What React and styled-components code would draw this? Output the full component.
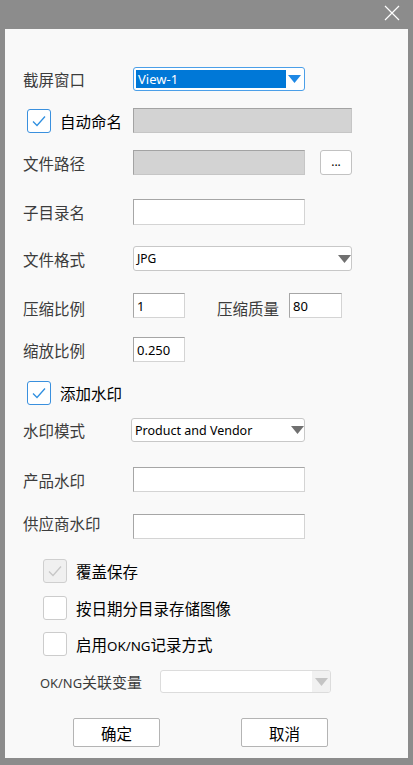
import styled, { createGlobalStyle } from "styled-components";

const GlobalStyle = createGlobalStyle`
  html, body {
    margin: 0;
    padding: 0;
    background: #8c8c8c;
  }
  * {
    box-sizing: border-box;
  }
`;

const FONT = `"Noto Sans CJK SC", "Noto Sans", sans-serif`;

export default function App() {
  return (
    <Window>
      <GlobalStyle />
      <TitleBar>
        <CloseIcon />
      </TitleBar>
      <Panel>
        <Row $top={38} $h={24}>
          <Label>截屏窗口</Label>
          <ActiveCombo>
            <Selected>View-1</Selected>
            <Arrow color="#1e88e5" />
          </ActiveCombo>
        </Row>

        <Row $top={17} $h={25} $left={22}>
          <CheckBox checked />
          <CheckLabel $w={73}>自动命名</CheckLabel>
          <GrayBox $w={219} />
        </Row>

        <Row $top={17} $h={25}>
          <Label>文件路径</Label>
          <GrayBox $w={172} />
          <BrowseButton>...</BrowseButton>
        </Row>

        <Row $top={24} $h={26}>
          <Label>子目录名</Label>
          <TextBox $w={172} />
        </Row>

        <Row $top={21} $h={25}>
          <Label>文件格式</Label>
          <Combo $w={219}>
            <ComboText $size={12}>JPG</ComboText>
            <Arrow color="#707070" />
          </Combo>
        </Row>

        <Row $top={22} $h={25}>
          <Label $offset={2}>压缩比例</Label>
          <TextBox $w={52}>1</TextBox>
          <Label $w={72} $ml={32} $offset={2}>压缩质量</Label>
          <TextBox $w={53}>80</TextBox>
        </Row>

        <Row $top={19} $h={25}>
          <Label>缩放比例</Label>
          <TextBox $w={52}>0.250</TextBox>
        </Row>

        <Row $top={19} $h={24} $left={22}>
          <CheckBox checked />
          <CheckLabel>添加水印</CheckLabel>
        </Row>

        <Row $top={13} $h={24}>
          <Label $w={108}>水印模式</Label>
          <Combo $w={174}>
            <ComboText $size={12.5}>Product and Vendor</ComboText>
            <Arrow color="#707070" />
          </Combo>
        </Row>

        <Row $top={25} $h={25}>
          <Label>产品水印</Label>
          <TextBox $w={172} />
        </Row>

        <Row $top={22} $h={25}>
          <Label $offset={-4}>供应商水印</Label>
          <TextBox $w={172} />
        </Row>

        <Row $top={20} $h={24} $left={38}>
          <CheckBox checked disabled />
          <CheckLabel>覆盖保存</CheckLabel>
        </Row>

        <Row $top={13} $h={24} $left={38}>
          <CheckBox />
          <CheckLabel>按日期分目录存储图像</CheckLabel>
        </Row>

        <Row $top={12} $h={24} $left={38}>
          <CheckBox />
          <CheckLabel>
            启用<Latin>OK/NG</Latin>记录方式
          </CheckLabel>
        </Row>

        <Row $top={14} $h={23} $left={35}>
          <SmallLabel>
            <Latin>OK/NG</Latin>关联变量
          </SmallLabel>
          <Combo $w={171} $disabled>
            <ComboText />
            <ArrowBox>
              <Arrow color="#c4c4c4" />
            </ArrowBox>
          </Combo>
        </Row>

        <ButtonRow>
          <Button>确定</Button>
          <Button>取消</Button>
        </ButtonRow>
      </Panel>
    </Window>
  );
}

function CloseIcon() {
  return (
    <CloseSvg width="16" height="16" viewBox="0 0 16 16">
      <path d="M1 1 L15 15 M15 1 L1 15" stroke="#ffffff" strokeWidth="1.2" fill="none" />
    </CloseSvg>
  );
}

function Arrow({ color }) {
  return (
    <ArrowSvg width="13" height="8" viewBox="0 0 13 8">
      <path d="M0 0 H13 L6.5 8 Z" fill={color} />
    </ArrowSvg>
  );
}

function CheckBox({ checked, disabled }) {
  return (
    <Box $checked={checked} $disabled={disabled}>
      {checked && (
        <svg width="22" height="22" viewBox="0 0 22 22">
          <path
            d="M5 11.5 L9 15.5 L17 6.5"
            stroke={disabled ? "#c6c6c6" : "#2f8fe0"}
            strokeWidth="1.3"
            fill="none"
          />
        </svg>
      )}
    </Box>
  );
}

const Window = styled.div`
  display: flex;
  flex-direction: column;
  width: 413px;
  height: 765px;
  background: #8c8c8c;
  font-family: ${FONT};
`;

const TitleBar = styled.div`
  height: 29px;
  display: flex;
  justify-content: flex-end;
  align-items: center;
  padding-right: 13px;
  padding-bottom: 3px;
`;

const CloseSvg = styled.svg`
  display: block;
`;

const Panel = styled.div`
  flex: 1;
  margin: 0 5px 7px 5px;
  background: #f9f9f9;
  display: flex;
  flex-direction: column;
`;

const Row = styled.div`
  display: flex;
  align-items: center;
  height: ${(p) => p.$h}px;
  margin-top: ${(p) => p.$top}px;
  padding-left: ${(p) => p.$left ?? 18}px;
`;

const Label = styled.span`
  width: ${(p) => p.$w ?? 110}px;
  margin-left: ${(p) => p.$ml ?? 0}px;
  flex-shrink: 0;
  font-size: 15.5px;
  color: #3c3c3c;
  position: relative;
  top: ${(p) => p.$offset ?? 0}px;
  white-space: nowrap;
`;

const Latin = styled.span`
  font-family: "Noto Sans", sans-serif;
  font-size: 0.86em;
`;

const SmallLabel = styled.span`
  width: 120px;
  flex-shrink: 0;
  font-size: 15px;
  color: #3c3c3c;
  white-space: nowrap;
`;

const CheckLabel = styled.span`
  margin-left: 9px;
  width: ${(p) => (p.$w ? `${p.$w}px` : "auto")};
  flex-shrink: 0;
  font-size: 15.5px;
  color: #000;
  white-space: nowrap;
`;

const Box = styled.span`
  width: 24px;
  height: 24px;
  flex-shrink: 0;
  border: 1px solid
    ${(p) => (p.$disabled ? "#cfcfcf" : p.$checked ? "#3a90de" : "#cccccc")};
  border-radius: 3px;
  background: ${(p) => (p.$disabled ? "#f0f0f0" : "#ffffff")};
  display: flex;
  align-items: center;
  justify-content: center;
`;

const ActiveCombo = styled.div`
  width: 172px;
  height: 24px;
  border: 1px solid #4b9fe8;
  border-radius: 3px;
  background: #ffffff;
  padding: 2px;
  display: flex;
  align-items: center;
`;

const Selected = styled.span`
  width: 150px;
  height: 100%;
  background: #0078d7;
  color: #ffffff;
  font-family: "Noto Sans", sans-serif;
  font-size: 13px;
  line-height: 19px;
  padding-left: 2px;
`;

const ArrowSvg = styled.svg`
  display: block;
  margin: 0 auto;
`;

const GrayBox = styled.div`
  width: ${(p) => p.$w}px;
  height: 100%;
  background: #d3d3d3;
  border: 1px solid #a3a3a3;
  border-right-color: #c6c6c6;
  border-bottom-color: #c6c6c6;
`;

const TextBox = styled.div`
  width: ${(p) => p.$w}px;
  height: 100%;
  background: #ffffff;
  border: 1px solid #a6a6a6;
  border-right-color: #d4d4d4;
  border-bottom-color: #d4d4d4;
  font-family: "Noto Sans", sans-serif;
  font-size: 13px;
  color: #000;
  padding-left: 3px;
  display: flex;
  align-items: center;
`;

const BrowseButton = styled.div`
  width: 32px;
  height: 100%;
  margin-left: 15px;
  background: #ffffff;
  border: 1px solid #c2c2c2;
  border-radius: 3px;
  display: flex;
  align-items: center;
  justify-content: center;
  font-family: "Noto Sans", sans-serif;
  font-size: 12px;
  padding-bottom: 3px;
  color: #000;
`;

const Combo = styled.div`
  width: ${(p) => p.$w}px;
  height: 100%;
  background: #ffffff;
  border: 1px solid ${(p) => (p.$disabled ? "#dcdcdc" : "#c8c8c8")};
  border-radius: 3px;
  display: flex;
  align-items: center;
  overflow: hidden;
`;

const ComboText = styled.span`
  flex: 1;
  font-family: "Noto Sans", sans-serif;
  font-size: ${(p) => p.$size ?? 13}px;
  color: #000;
  padding-left: 3px;
  white-space: nowrap;
`;

const ArrowBox = styled.span`
  width: 18px;
  height: 100%;
  background: #f1f1f1;
  display: flex;
  align-items: center;
`;

const ButtonRow = styled.div`
  display: flex;
  gap: 81px;
  margin-top: 25px;
  padding-left: 68px;
`;

const Button = styled.button`
  width: 87px;
  height: 29px;
  background: #ffffff;
  border: 1px solid #b4b4b4;
  border-radius: 2px;
  font-family: ${FONT};
  font-size: 15.5px;
  color: #000;
  padding: 0;
`;
